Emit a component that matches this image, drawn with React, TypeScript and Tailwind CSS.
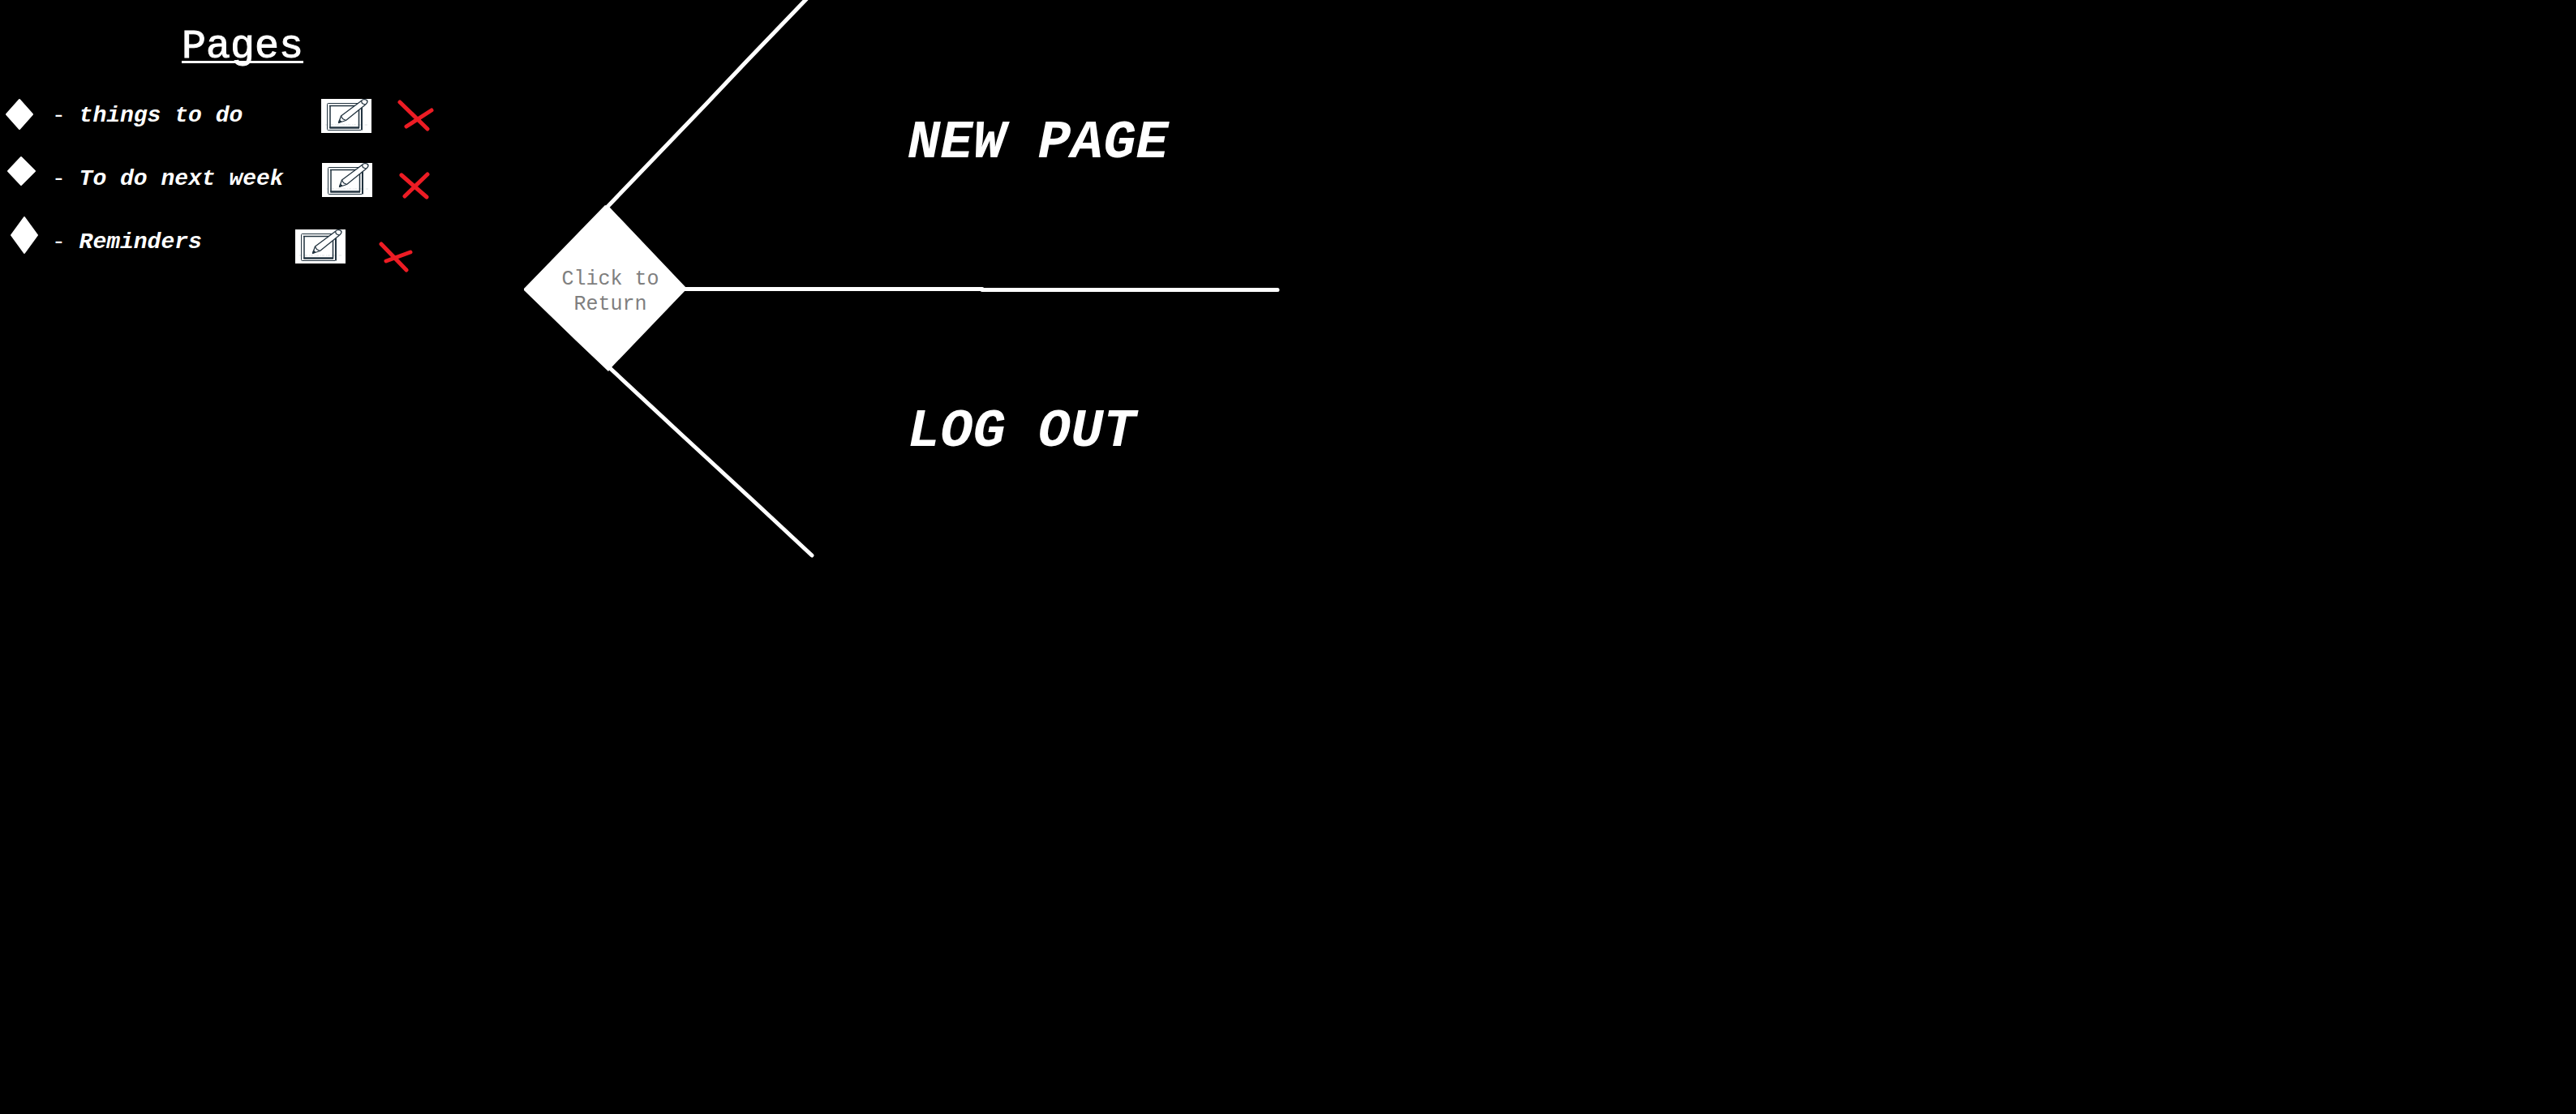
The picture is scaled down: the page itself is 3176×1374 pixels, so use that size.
type Point = [number, number];

interface PageEntry {
  title: string;
  diamond: string;
  edit: Point;
  cross: string;
}

const pages: PageEntry[] = [
  {
    title: "things to do",
    diamond: "24,21 40,39 24,57 8,39",
    edit: [36, 20],
    cross: "M29 24L63 57M37 54L68 34",
  },
  {
    title: "To do next week",
    diamond: "26,14 43,31 26,48 10,31",
    edit: [37, 21],
    cross: "M31 36L62 63M35 62L63 35",
  },
  {
    title: "Reminders",
    diamond: "30,10 46,32 30,54 14,32",
    edit: [4, 25],
    cross: "M6 43L37 75M12 64L42 53",
  },
];

function Diamond({ points }: { points: string }) {
  return (
    <svg viewBox="0 0 64 78" className="h-[78px] w-16 shrink-0" aria-hidden="true">
      <polygon points={points} fill="#fff" stroke="#fff" strokeWidth="2" strokeLinejoin="round" />
    </svg>
  );
}

function EditIcon({ at }: { at: Point }) {
  return (
    <svg viewBox="0 0 104 78" className="h-[78px] w-[104px]" aria-hidden="true">
      <g transform={`translate(${at[0]} ${at[1]})`} stroke="#22333f" fill="none">
        <rect width="62" height="42" fill="#fff" stroke="none" />
        <path d="M5 32H57" stroke="#eef0f1" strokeWidth="2" strokeDasharray="3 2 1 1" />
        <path d="M50 5.500H8.500Q7.500 5.500 7.500 6.500V37.500Q7.500 38.500 8.500 38.500H49" strokeWidth="1" />
        <path d="M50 8V38.500" strokeWidth="2" />
        <path d="M11 36V9M10 8.500H46.500V36" strokeWidth="1.5" />
        <path d="M10.300 35.500H47" strokeWidth="2.5" />
        <path
          d="M21.5 29.5L24.5 21L50 2C51 0 57 0 57 3.500C57 5.500 55 6 54 7.500L30.5 26.5Z"
          fill="#fff"
          strokeWidth="1.3"
          strokeLinejoin="round"
        />
        <path d="M24.5 21L26.5 24.5L30.5 26.5M49.500 2.500L50.500 5.500L54 7" strokeWidth="1.2" />
        <path d="M21.5 29.5L22.5 26L25 28Z" fill="#22333f" strokeWidth="1" />
      </g>
    </svg>
  );
}

function CrossIcon({ d }: { d: string }) {
  return (
    <svg viewBox="0 0 80 78" className="h-[78px] w-20" aria-hidden="true">
      <path d={d} stroke="#ed1c24" strokeWidth="5" strokeLinecap="round" fill="none" />
    </svg>
  );
}

function PageList() {
  return (
    <aside className="w-[598px] shrink-0">
      <h1 className="pt-7 pb-[14px] text-center text-[50px] leading-[60px] underline decoration-[3px] underline-offset-4 [-webkit-text-stroke:1px_white] [text-decoration-skip-ink:none]">
        Pages
      </h1>
      <ul>
        {pages.map((page) => (
          <li key={page.title} className="flex items-center">
            <Diamond points={page.diamond} />
            <a href="#" className="w-[296px] pt-1 text-[28px] leading-9 whitespace-pre">
              {"- "}
              <span className="font-bold italic">{page.title}</span>
            </a>
            <button type="button" aria-label={`Edit ${page.title}`}>
              <EditIcon at={page.edit} />
            </button>
            <button type="button" aria-label={`Delete ${page.title}`}>
              <CrossIcon d={page.cross} />
            </button>
          </li>
        ))}
      </ul>
    </aside>
  );
}

function Menu() {
  return (
    <nav className="relative ml-10 flex w-[940px] shrink-0 items-center self-start">
      <svg viewBox="0 0 940 712" className="pointer-events-none absolute inset-0 h-full w-full" aria-hidden="true">
        <g stroke="#fff" strokeWidth="5" strokeLinecap="round" fill="none">
          <path d="M111 255L231 130L283 75L358 -3" />
          <path d="M206 356.500H573M573 357.500H937" />
          <path d="M114 454L200 534L290 617L363 685" />
        </g>
      </svg>
      <button type="button" className="relative flex h-[208px] w-[209px] items-center justify-center">
        <svg viewBox="0 0 209 208" className="absolute inset-0 h-full w-full" aria-hidden="true">
          <polygon points="108,1 114,4 209,104 117,200 112,206 72,168 8,106 8,104" fill="#fff" />
        </svg>
        <span className="relative pt-2 pl-5 text-[25px] leading-[31px] text-[#7f7f7f]">
          Click to
          <br />
          Return
        </span>
      </button>
      <div className="flex flex-col pl-[272px] text-[67px] font-bold italic">
        <button type="button" className="h-[356px] pb-1 text-left">
          NEW PAGE
        </button>
        <button type="button" className="h-[356px] pb-1 text-left">
          LOG OUT
        </button>
      </div>
    </nav>
  );
}

export default function App() {
  return (
    <main className="flex min-h-screen overflow-x-hidden bg-black font-['Liberation_Mono',monospace] text-white">
      <PageList />
      <Menu />
    </main>
  );
}
